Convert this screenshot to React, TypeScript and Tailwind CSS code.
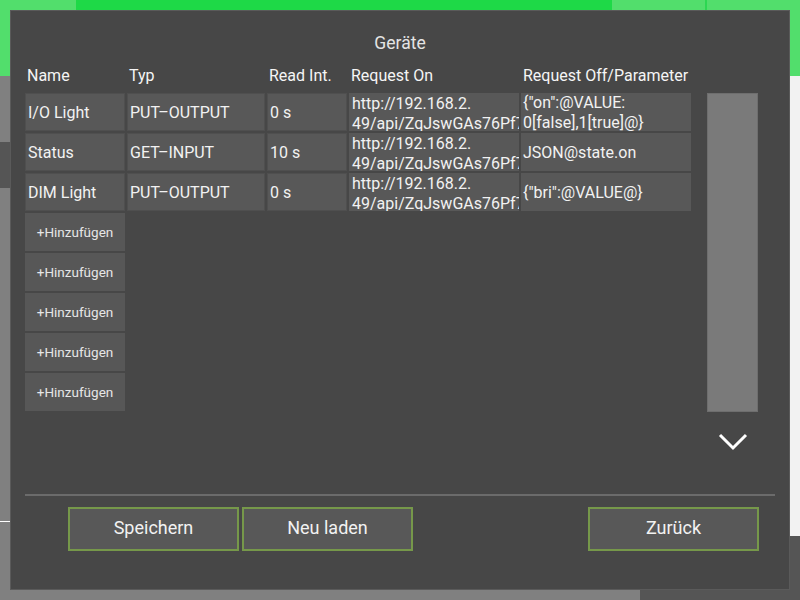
import React from "react";

type Device = {
  name: string;
  typ: string;
  interval: string;
  on: [string, string];
  off: string[];
};

const devices: Device[] = [
  {
    name: "I/O Light",
    typ: "PUT–OUTPUT",
    interval: "0 s",
    on: ["http://192.168.2.", "49/api/ZqJswGAs76Pf7Hk2dLq/lights/1/state"],
    off: ['{"on":@VALUE:', "0[false],1[true]@}"],
  },
  {
    name: "Status",
    typ: "GET–INPUT",
    interval: "10 s",
    on: ["http://192.168.2.", "49/api/ZqJswGAs76Pf7Hk2dLq/lights/1"],
    off: ["JSON@state.on"],
  },
  {
    name: "DIM Light",
    typ: "PUT–OUTPUT",
    interval: "0 s",
    on: ["http://192.168.2.", "49/api/ZqJswGAs76Pf7Hk2dLq/lights/2/state"],
    off: ['{"bri":@VALUE@}'],
  },
];

const cell =
  "h-[38px] flex items-center pl-[2px] pt-[1px] bg-[#585858] border border-[#4f4f4f] overflow-hidden whitespace-nowrap";

const BottomButton = ({ label }: { label: string }) => (
  <button className="w-[171px] h-[44px] pb-[3px] bg-[#585858] border-2 border-[#76984a] text-[18px] text-[#f2f2f2]">
    {label}
  </button>
);

export default function App() {
  return (
    <div
      className="relative w-[800px] h-[600px] overflow-hidden flex flex-col"
      style={{ fontFamily: "Roboto, 'Liberation Sans', sans-serif" }}
    >
      {/* ---------- background page ---------- */}
      <div className="flex h-[76px]">
        <div className="w-[76px] bg-[#52de6c]" />
        <div className="w-[536px] bg-[#1ed947]" />
        <div className="w-[93px] bg-[#52de6c]" />
        <div className="w-[2px] bg-[#2cd752]" />
        <div className="flex-1 bg-[#52de6c]" />
      </div>
      <div className="flex flex-1">
        <div className="w-[10px] flex flex-col bg-[#808080]">
          <div className="h-[66px]" />
          <div className="h-[46px] bg-[#555555]" />
          <div className="h-[333px]" />
          <div className="h-px bg-white" />
        </div>
        <div className="flex-1 bg-[#474747]" />
        <div className="w-[10px] flex flex-col">
          <div className="h-[460px] bg-[#f2f2f2]" />
          <div className="flex-1 bg-[#555555]" />
        </div>
      </div>
      <div className="flex h-[10px]">
        <div className="w-[640px] bg-[#808080]" />
        <div className="flex-1 bg-[#555555]" />
      </div>

      {/* ---------- dialog ---------- */}
      <div className="absolute left-[10px] top-[10px] w-[780px] h-[580px] bg-[#474747] border border-[#5a5a5a] flex flex-col px-[14px] pt-[20px]">
        <div className="h-[24px] leading-[24px] text-center text-[17.5px] text-[#e4e4e4]">
          Geräte
        </div>

        <div className="h-[429px] mt-[10px] flex">
          <div className="flex flex-col">
            {/* headers */}
            <div className="grid grid-cols-[100px_138px_80px_170px_170px] gap-x-[2px] h-[20px] mt-[1px] mb-[7px] text-[16px] leading-[20px] text-[#f5f5f5] whitespace-nowrap">
              <div className="pl-[2px]">Name</div>
              <div className="pl-[2px]">Typ</div>
              <div className="pl-[2px]">Read Int.</div>
              <div className="pl-[2px]">Request On</div>
              <div className="pl-[2px]">Request Off/Parameter</div>
            </div>

            {/* rows */}
            <div className="flex flex-col gap-[2px] text-[16px] text-[#f2f2f2]">
              {devices.map((d) => (
                <div
                  key={d.name}
                  className="grid grid-cols-[100px_138px_80px_170px_170px] gap-x-[2px]"
                >
                  <div className={cell}>{d.name}</div>
                  <div className={cell}>{d.typ}</div>
                  <div className={cell}>{d.interval}</div>
                  <div className="h-[38px] flex flex-col justify-center pl-[3px] pt-[3px] bg-[#585858] overflow-hidden whitespace-nowrap leading-[20px]">
                    <span>{d.on[0]}</span>
                    <span>{d.on[1]}</span>
                  </div>
                  <div className="h-[38px] flex flex-col justify-center pl-[2px] pt-[2px] bg-[#585858] overflow-hidden whitespace-nowrap leading-[20px]">
                    {d.off.map((line) => (
                      <span key={line}>{line}</span>
                    ))}
                  </div>
                </div>
              ))}
              {[0, 1, 2, 3, 4].map((i) => (
                <button
                  key={i}
                  className="w-[100px] h-[38px] bg-[#575757] text-[13.5px] text-[#e6e6e6]"
                >
                  +Hinzufügen
                </button>
              ))}
            </div>
          </div>

          {/* scrollbar + arrow */}
          <div className="ml-[16px] w-[51px] flex flex-col items-center pt-[28px]">
            <div className="w-[51px] h-[319px] bg-[#7a7a7a] border border-[#6e6e6e]" />
            <svg width="32" height="20" viewBox="0 0 32 20" className="mt-[20px]">
              <path
                d="M3 3 L16 16 L29 3"
                fill="none"
                stroke="#ffffff"
                strokeWidth="3"
              />
            </svg>
          </div>
        </div>

        {/* ---------- footer ---------- */}
        <div className="h-[2px] bg-[#6b6b6b]" />
        <div className="flex mt-[11px] pl-[43px] pr-[16px] gap-[3px]">
          <BottomButton label="Speichern" />
          <BottomButton label="Neu laden" />
          <div className="flex-1" />
          <BottomButton label="Zurück" />
        </div>
      </div>
    </div>
  );
}
